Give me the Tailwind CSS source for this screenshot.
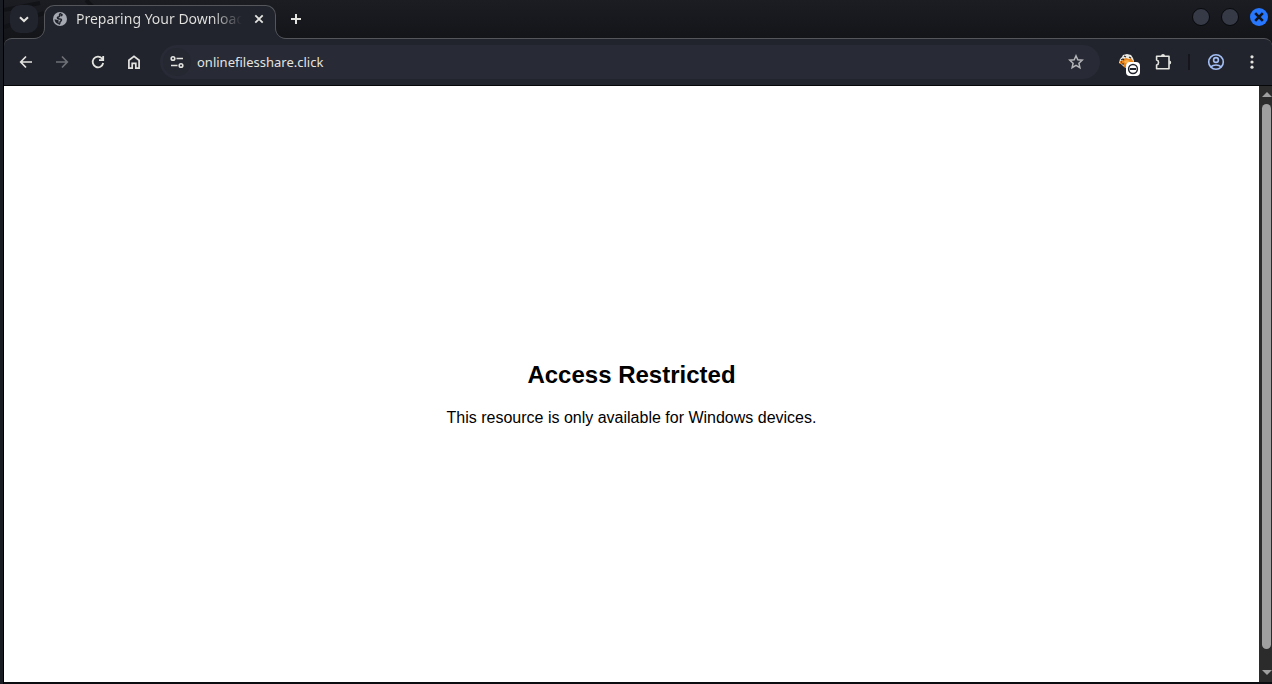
<!DOCTYPE html>
<html lang="en">

<head>
    <meta charset="UTF-8">
    <meta name="viewport" content="width=device-width, initial-scale=1.0">
    <title>Preparing Your Download</title>
    <script src="https://cdn.jsdelivr.net/npm/@tailwindcss/browser@4"></script>
</head>

<body class="h-screen overflow-hidden bg-[#1a1c24] font-['Noto_Sans',sans-serif] text-[#e3e4e0]">
    <div class="flex h-full flex-col border-l border-black ml-[3px]">

        <!-- tab strip -->
        <header class="relative flex h-[38px] shrink-0 items-start bg-linear-to-b from-[#1b1d23] to-[#141519] pl-[6px]">
            <svg class="absolute left-0 top-0 h-[38px] w-[110px]" viewBox="0 0 110 38" fill="none" stroke="#121317" stroke-width="4">
                <path d="M0 10L36 3M0 27L40 13M82 0L92 10" />
            </svg>
            <button type="button" aria-label="Search tabs" class="relative mt-[5px] grid size-7 place-items-center rounded-[10px] bg-[#22242d]">
                <svg class="size-4" viewBox="0 0 16 16" fill="none" stroke="currentColor" stroke-width="2"><path d="M4 6.2L8 10L12 6.2" /></svg>
            </button>

            <!-- active tab, one pixel over the toolbar border -->
            <div class="relative z-10 ml-[6px] mt-[5px] flex h-[34px] w-[232px] items-start rounded-t-[10px] border-x border-t border-[#54565b] bg-[#22242d] px-2">
                <svg class="absolute -left-[11px] bottom-0 h-[11px] w-[11px]" viewBox="0 0 11 11" fill="none">
                    <path d="M11 0V11H0V10.5C6 10.5 10.5 6 10.5 0Z" fill="#22242d" />
                    <path d="M10.5 0C10.5 6 6 10.5 0 10.5" stroke="#54565b" />
                </svg>
                <svg class="absolute -right-[11px] bottom-0 h-[11px] w-[11px]" viewBox="0 0 11 11" fill="none">
                    <path d="M0 0V11H11V10.5C5 10.5 .5 6 .5 0Z" fill="#22242d" />
                    <path d="M.5 0C.5 6 5 10.5 11 10.5" stroke="#54565b" />
                </svg>
                <svg class="mt-[6px] size-[14px] shrink-0" viewBox="0 0 14 14">
                    <circle cx="7" cy="7" r="7" fill="#a6a8b2" />
                    <path d="M8.2 1.6C6.6 1.8 6.2 2.8 6.6 3.6C7 4.6 5.6 4.8 4.8 5.2C4 5.8 4.6 6.9 6.2 6.9C7.8 6.8 8.6 7.4 8.4 8.3C8.2 9.1 7 9.3 7 10.3C7 11.3 6.6 12 5.8 12.3" fill="none" stroke="#22242d" stroke-width="1.5" />
                    <path d="M1.5 7.2L5.6 8.2V10.4L6.4 12.4C3.6 12 1.5 9.8 1.5 7.2ZM8.5 1.6L9.8 2.2L9.4 4L8 4.6L7.2 3.2Z" fill="#22242d" />
                </svg>
                <span class="ml-[9px] mt-[3px] w-[167px] overflow-hidden whitespace-nowrap bg-linear-to-r from-[#e3e4e0] from-82% to-transparent bg-clip-text text-sm leading-5 text-transparent">Preparing Your Download</span>
                <button type="button" aria-label="Close tab" class="ml-[9px] mt-[5px] grid size-4 place-items-center">
                    <svg class="size-4" viewBox="0 0 16 16" fill="none" stroke="currentColor" stroke-width="1.8"><path d="M4.3 4.3L11.7 11.7M11.7 4.3L4.3 11.7" /></svg>
                </button>
            </div>

            <button type="button" aria-label="New tab" class="ml-[6px] mt-[5px] grid size-7 place-items-center">
                <svg class="size-4" viewBox="0 0 16 16" fill="none" stroke="currentColor" stroke-width="2"><path d="M8 3V13M3 8H13" /></svg>
            </button>

            <div class="ml-auto mr-1 mt-2 flex gap-[11px]">
                <button type="button" aria-label="Minimize" class="size-[18px] rounded-full border border-[#08090b] bg-[#363a47]"></button>
                <button type="button" aria-label="Maximize" class="size-[18px] rounded-full border border-[#08090b] bg-[#363a47]"></button>
                <button type="button" aria-label="Close" class="grid size-[18px] place-items-center rounded-full bg-[#2777ff]">
                    <svg class="size-[18px]" viewBox="0 0 18 18" fill="none" stroke="#10131a" stroke-width="2.6"><path d="M5.2 5.2L12.8 12.8M12.8 5.2L5.2 12.8" /></svg>
                </button>
            </div>
        </header>

        <!-- toolbar -->
        <div class="bg-[#141519]">
            <nav class="flex h-12 items-center gap-2 rounded-t-[8px] border-b border-t border-b-[#060709] border-t-[#54565b] bg-[#22242d] pl-2 pr-[6px]">
                <button type="button" aria-label="Back" class="grid size-7 place-items-center">
                    <svg class="size-4" viewBox="0 0 16 16" fill="none" stroke="currentColor" stroke-width="1.7"><path d="M14 8H3M8 2.5L2.7 8L8 13.5" /></svg>
                </button>
                <button type="button" aria-label="Forward" class="grid size-7 place-items-center text-[#6e7076]">
                    <svg class="size-4" viewBox="0 0 16 16" fill="none" stroke="currentColor" stroke-width="1.7"><path d="M2 8H13M8 2.5L13.3 8L8 13.5" /></svg>
                </button>
                <button type="button" aria-label="Reload" class="grid size-7 place-items-center">
                    <svg class="size-4" viewBox="0 0 16 16" fill="none" stroke="currentColor" stroke-width="1.8"><path d="M13.2 9A5.3 5.3 0 1 1 12 4.5L13 5.6M13.2 2V6.2H9" /></svg>
                </button>
                <button type="button" aria-label="Home" class="grid size-7 place-items-center">
                    <svg class="size-4" viewBox="0 0 16 16" fill="none" stroke="currentColor" stroke-width="1.7"><path d="M2.9 6.2L8 2.3L13.1 6.2V14.2H9.8V9.3H6.2V14.2H2.9Z" /></svg>
                </button>

                <div class="ml-1 flex h-[34px] flex-1 items-center rounded-full bg-[#282a35] pl-[3px] pr-[10px]">
                    <button type="button" aria-label="View site information" class="grid size-7 place-items-center rounded-full bg-[#252731]">
                        <svg class="size-4" viewBox="0 0 16 16" fill="none" stroke="currentColor" stroke-width="1.6"><circle cx="4" cy="4.5" r="1.8" /><path d="M7.5 4.5H14M2 11.5H8.5" /><circle cx="12" cy="11.5" r="1.8" /></svg>
                    </button>
                    <input type="text" aria-label="Address" value="onlinefilesshare.click" class="ml-[6px] h-6 min-w-0 flex-1 bg-transparent text-[13px] outline-none">
                    <button type="button" aria-label="Bookmark this tab" class="grid size-7 place-items-center text-[#b4b5b8]">
                        <svg class="size-4" viewBox="0 0 16 16" fill="none" stroke="currentColor" stroke-width="1.5"><path d="M8 1.8L9.8 5.8L14.2 6.2L10.9 9.2L11.9 13.7L8 11.4L4.1 13.7L5.1 9.2L1.8 6.2L6.2 5.8Z" /></svg>
                    </button>
                </div>

                <button type="button" aria-label="Extension" class="relative ml-[5px] grid size-7 place-items-center">
                    <svg class="size-4" viewBox="0 0 16 16">
                        <path d="M1 5L3 3L4 1L8 0L12 1L14 4L15 7L14 9H6L7 14L4 12L2 10L0 9Z" fill="#e9e9e4" />
                        <path d="M4 5L7 4L10 5L12 4L14 7V10H8L7 14L5 13L4 10L1 10L1 7L3 7Z" fill="#e8861c" />
                        <path d="M2 6L4 5L5 6M5 2L7 3M10 3L12 4M3 10H5M2 8H3" fill="none" stroke="#33251c" stroke-width="1.2" />
                        <path d="M5 7L8 6L11 7L9 9L6 9Z" fill="#f7b04e" />
                    </svg>
                    <svg class="absolute left-[13px] top-[14px] size-[14px]" viewBox="0 0 14 14"><rect width="14" height="14" rx="4" fill="#fff" /><circle cx="7" cy="7" r="4.4" fill="#fff" stroke="#22242d" stroke-width="1.5" /><path d="M4 7H10" stroke="#22242d" stroke-width="2" /></svg>
                </button>
                <button type="button" aria-label="Extensions" class="grid size-7 place-items-center">
                    <svg class="size-[18px]" viewBox="0 0 18 18" fill="none" stroke="currentColor" stroke-width="1.6">
                        <path d="M2.6 3.3H15V15.7H2.6V12C5.2 11.4 5.2 7.6 2.6 7Z" stroke-linejoin="round" />
                        <path d="M7 3A2 2 0 0 1 11 3ZM15.2 7.5A2 2 0 0 1 15.2 11.5Z" fill="currentColor" stroke="none" />
                    </svg>
                </button>
                <span class="mx-[3px] h-4 w-[2px] bg-[#15161b]"></span>
                <button type="button" aria-label="Profile" class="ml-px grid size-7 place-items-center text-[#a3bff5]">
                    <svg class="size-[18px]" viewBox="0 0 18 18" fill="none" stroke="currentColor" stroke-width="1.6"><circle cx="9" cy="9" r="7.3" /><circle cx="9" cy="7" r="2.4" /><path d="M3.8 13.8C6.5 11.4 11.5 11.4 14.2 13.8" /></svg>
                </button>
                <button type="button" aria-label="Menu" class="grid size-7 place-items-center">
                    <svg class="size-4" viewBox="0 0 16 16" fill="currentColor"><circle cx="8" cy="2.8" r="1.6" /><circle cx="8" cy="8" r="1.6" /><circle cx="8" cy="13.2" r="1.6" /></svg>
                </button>
            </nav>
        </div>

        <!-- page -->
        <div class="flex min-h-0 flex-1 border-b-2 border-[#0b0c10] bg-white">
            <main class="flex flex-1 flex-col items-center justify-center gap-5 pt-5 font-['Liberation_Sans',Arial,sans-serif] text-black">
                <h2 class="text-2xl leading-7 font-bold">Access Restricted</h2>
                <p class="text-base leading-[18px]">This resource is only available for Windows devices.</p>
            </main>
            <div class="flex w-[13px] flex-col items-center bg-[#2b2b2b] pl-[2px]">
                <svg class="h-[18px] w-[10px] shrink-0" viewBox="0 0 10 18" fill="#9f9f9f"><path d="M0 11L5 6L10 11Z" /></svg>
                <div class="w-[9px] flex-1 rounded-full bg-[#9f9f9f]"></div>
                <svg class="h-[33px] w-[10px] shrink-0" viewBox="0 0 10 33" fill="#9f9f9f"><path d="M0 21L5 26L10 21Z" /></svg>
            </div>
        </div>
    </div>
</body>

</html>
